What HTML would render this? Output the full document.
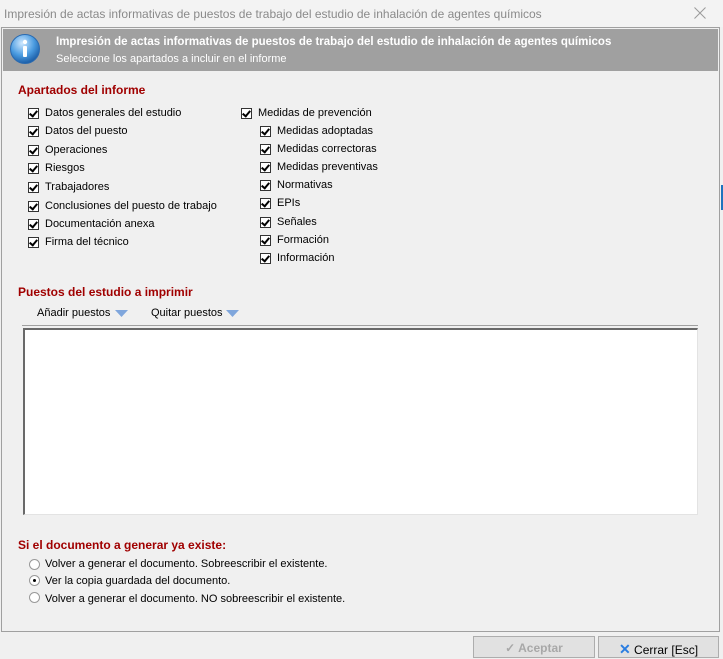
<!DOCTYPE html>
<html><head><meta charset="utf-8"><style>
*{margin:0;padding:0;box-sizing:border-box}
body{width:723px;height:659px;background:#f0f0f0;font-family:"Liberation Sans",sans-serif;font-size:11px;color:#000;position:relative;overflow:hidden}
.a{position:absolute;white-space:nowrap}
.title{left:0;top:0;width:723px;height:27px;background:#f3f3f3;color:#8a8a8a;font-size:12px;padding:7px 0 0 4px}
.panel{left:1px;top:27px;width:719px;height:605px;border:1px solid #a0a0a0;background:#f0f0f0}
.hdr{left:3px;top:29px;width:715px;height:42px;background:#a0a0a0;color:#fff}
.red{color:#a00000;font-weight:bold;font-size:12px}
.cb{position:absolute;width:11px;height:11px;border:1px solid #333;background:#fff}
.cb:after{content:"";position:absolute;left:2px;top:0px;width:3px;height:6px;border:solid #000;border-width:0 2px 2px 0;transform:rotate(40deg)}
.rb{position:absolute;width:11px;height:11px;border:1px solid #999;border-radius:50%;background:#fff}
.btn{position:absolute;top:636px;height:22px;border:1px solid #adadad;background:#e1e1e1;text-align:center;padding-top:4px;font-size:12px}
</style></head><body>
<div class="a title">Impresión de actas informativas de puestos de trabajo del estudio de inhalación de agentes químicos</div>
<svg class="a" style="left:694px;top:7px" width="12" height="12"><path d="M0.5 0.5L11.5 11.5M11.5 0.5L0.5 11.5" stroke="#999" stroke-width="1"/></svg>
<div class="a panel"></div>
<div class="a" style="left:721px;top:185px;width:2px;height:25px;background:#1e73be"></div>
<div class="a hdr">
<svg style="position:absolute;left:6px;top:4px" width="33" height="33"><defs><radialGradient id="g" cx="40%" cy="30%" r="70%"><stop offset="0" stop-color="#cfe8ff"/><stop offset="0.6" stop-color="#4a9be0"/><stop offset="1" stop-color="#1d5fa8"/></radialGradient></defs><circle cx="16" cy="16" r="14.5" fill="url(#g)" stroke="#2a6ab0"/><circle cx="16" cy="9" r="2.2" fill="#fff"/><rect x="14" y="13" width="4" height="11" rx="1" fill="#fff"/></svg>
<div class="a" style="left:53px;top:7px;font-weight:bold;font-size:11.5px">Impresión de actas informativas de puestos de trabajo del estudio de inhalación de agentes químicos</div>
<div class="a" style="left:53px;top:24px;font-size:11px">Seleccione los apartados a incluir en el informe</div>
</div>
<div class="a red" style="left:18px;top:83px">Apartados del informe</div>

<div class="cb" style="left:28px;top:108px"></div><div class="a" style="left:45px;top:107px">Datos generales del estudio</div>
<div class="cb" style="left:28px;top:126px"></div><div class="a" style="left:45px;top:125px">Datos del puesto</div>
<div class="cb" style="left:28px;top:145px"></div><div class="a" style="left:45px;top:144px">Operaciones</div>
<div class="cb" style="left:28px;top:163px"></div><div class="a" style="left:45px;top:162px">Riesgos</div>
<div class="cb" style="left:28px;top:182px"></div><div class="a" style="left:45px;top:181px">Trabajadores</div>
<div class="cb" style="left:28px;top:201px"></div><div class="a" style="left:45px;top:200px">Conclusiones del puesto de trabajo</div>
<div class="cb" style="left:28px;top:219px"></div><div class="a" style="left:45px;top:218px">Documentación anexa</div>
<div class="cb" style="left:28px;top:237px"></div><div class="a" style="left:45px;top:236px">Firma del técnico</div>

<div class="cb" style="left:241px;top:108px"></div><div class="a" style="left:258px;top:107px">Medidas de prevención</div>
<div class="cb" style="left:260px;top:126px"></div><div class="a" style="left:277px;top:125px">Medidas adoptadas</div>
<div class="cb" style="left:260px;top:144px"></div><div class="a" style="left:277px;top:143px">Medidas correctoras</div>
<div class="cb" style="left:260px;top:162px"></div><div class="a" style="left:277px;top:161px">Medidas preventivas</div>
<div class="cb" style="left:260px;top:180px"></div><div class="a" style="left:277px;top:179px">Normativas</div>
<div class="cb" style="left:260px;top:198px"></div><div class="a" style="left:277px;top:197px">EPIs</div>
<div class="cb" style="left:260px;top:217px"></div><div class="a" style="left:277px;top:216px">Señales</div>
<div class="cb" style="left:260px;top:235px"></div><div class="a" style="left:277px;top:234px">Formación</div>
<div class="cb" style="left:260px;top:253px"></div><div class="a" style="left:277px;top:252px">Información</div>

<div class="a red" style="left:18px;top:285px">Puestos del estudio a imprimir</div>
<div class="a" style="left:37px;top:307px">Añadir puestos</div>
<svg class="a" style="left:115px;top:310px" width="13" height="7"><path d="M0 0H13L6.5 7Z" fill="#7fa6dc"/></svg>
<div class="a" style="left:151px;top:307px">Quitar puestos</div>
<svg class="a" style="left:226px;top:310px" width="13" height="7"><path d="M0 0H13L6.5 7Z" fill="#7fa6dc"/></svg>
<div class="a" style="left:22px;top:325px;width:676px;height:1px;background:#a0a0a0"></div>
<div class="a" style="left:23px;top:328px;width:675px;height:187px;background:#fff;border:1px solid;border-color:#696969 #e3e3e3 #e3e3e3 #696969;border-width:2px 1px 1px 2px"></div>

<div class="a red" style="left:18px;top:538px">Si el documento a generar ya existe:</div>
<div class="rb" style="left:29px;top:559px"></div><div class="a" style="left:45px;top:558px">Volver a generar el documento. Sobreescribir el existente.</div>
<div class="rb" style="left:29px;top:575px"><div style="position:absolute;left:3px;top:3px;width:3px;height:3px;background:#000;border-radius:50%"></div></div><div class="a" style="left:45px;top:575px">Ver la copia guardada del documento.</div>
<div class="rb" style="left:29px;top:592px"></div><div class="a" style="left:45px;top:593px">Volver a generar el documento. NO sobreescribir el existente.</div>

<div class="btn" style="left:473px;width:122px;color:#a8a8a8;font-weight:bold">✓ Aceptar</div>
<div class="btn" style="left:598px;width:121px"><span style="color:#2a7de1;font-weight:bold;font-size:14px">✕</span> Cerrar [Esc]</div>
</body></html>
